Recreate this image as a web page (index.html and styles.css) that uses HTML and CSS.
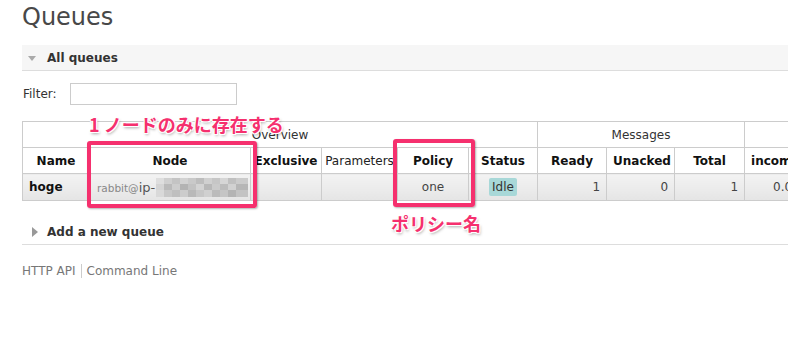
FILE: index.html
```html
<!DOCTYPE html>
<html lang="ja">
<head>
  <meta charset="UTF-8">
  <meta name="viewport" content="width=device-width, initial-scale=1.0">
  <title>Queues</title>
  <link rel="stylesheet" href="styles.css">
</head>
<body>
  <h1>Queues</h1>

  <div class="section open">
    <h2 class="section-title"><span class="arrow"></span>All queues</h2>
    <div class="section-body">
      <div class="filter">
        <label for="filter">Filter:</label>
        <input type="text" id="filter">
      </div>
      <table class="list">
        <colgroup>
          <col style="width: 67px">
          <col style="width: 161px">
          <col style="width: 71px">
          <col style="width: 76px">
          <col style="width: 71px">
          <col style="width: 69px">
          <col style="width: 69px">
          <col style="width: 68px">
          <col style="width: 70px">
          <col style="width: 72px">
          <col style="width: 100px">
          <col style="width: 60px">
        </colgroup>
        <thead>
          <tr class="groups">
            <th colspan="6">Overview</th>
            <th colspan="3">Messages</th>
            <th colspan="3">Message rates</th>
          </tr>
          <tr class="cols">
            <th>Name</th>
            <th>Node</th>
            <th>Exclusive</th>
            <th class="plain">Parameters</th>
            <th>Policy</th>
            <th>Status</th>
            <th>Ready</th>
            <th>Unacked</th>
            <th>Total</th>
            <th>incoming</th>
            <th>deliver / get</th>
            <th>ack</th>
          </tr>
        </thead>
        <tbody>
          <tr>
            <td class="name">hoge</td>
            <td class="node">
              <span class="host">rabbit@</span><span class="ip">ip-</span><svg class="mosaic" width="92" height="19" viewBox="0 0 92 19">
                <rect x="0" y="0" width="8" height="6" fill="#dedede"/>
                <rect x="8" y="0" width="8" height="6" fill="#cfcfcf"/>
                <rect x="16" y="0" width="8" height="6" fill="#c4c4c4"/>
                <rect x="24" y="0" width="8" height="6" fill="#d2d2d2"/>
                <rect x="32" y="0" width="8" height="6" fill="#c9c9c9"/>
                <rect x="40" y="0" width="8" height="6" fill="#bdbdbd"/>
                <rect x="48" y="0" width="8" height="6" fill="#d0d0d0"/>
                <rect x="56" y="0" width="8" height="6" fill="#c6c6c6"/>
                <rect x="64" y="0" width="8" height="6" fill="#d6d6d6"/>
                <rect x="72" y="0" width="8" height="6" fill="#c0c0c0"/>
                <rect x="80" y="0" width="12" height="6" fill="#cbcbcb"/>
                <rect x="0" y="6" width="8" height="6" fill="#d4d4d4"/>
                <rect x="8" y="6" width="8" height="6" fill="#bababa"/>
                <rect x="16" y="6" width="8" height="6" fill="#cdcdcd"/>
                <rect x="24" y="6" width="8" height="6" fill="#b3b3b3"/>
                <rect x="32" y="6" width="8" height="6" fill="#c2c2c2"/>
                <rect x="40" y="6" width="8" height="6" fill="#d3d3d3"/>
                <rect x="48" y="6" width="8" height="6" fill="#b8b8b8"/>
                <rect x="56" y="6" width="8" height="6" fill="#cacaca"/>
                <rect x="64" y="6" width="8" height="6" fill="#bcbcbc"/>
                <rect x="72" y="6" width="8" height="6" fill="#d1d1d1"/>
                <rect x="80" y="6" width="12" height="6" fill="#b6b6b6"/>
                <rect x="0" y="12" width="8" height="7" fill="#d9d9d9"/>
                <rect x="8" y="12" width="8" height="7" fill="#c8c8c8"/>
                <rect x="16" y="12" width="8" height="7" fill="#bfbfbf"/>
                <rect x="24" y="12" width="8" height="7" fill="#cccccc"/>
                <rect x="32" y="12" width="8" height="7" fill="#b9b9b9"/>
                <rect x="40" y="12" width="8" height="7" fill="#c7c7c7"/>
                <rect x="48" y="12" width="8" height="7" fill="#d0d0d0"/>
                <rect x="56" y="12" width="8" height="7" fill="#bbbbbb"/>
                <rect x="64" y="12" width="8" height="7" fill="#c5c5c5"/>
                <rect x="72" y="12" width="8" height="7" fill="#b4b4b4"/>
                <rect x="80" y="12" width="12" height="7" fill="#c3c3c3"/>
              </svg>
            </td>
            <td></td>
            <td></td>
            <td class="center">one</td>
            <td class="center"><span class="status-idle">Idle</span></td>
            <td class="num">1</td>
            <td class="num">0</td>
            <td class="num">1</td>
            <td class="num">0.00/s</td>
            <td class="num">0.00/s</td>
            <td class="num">0.00/s</td>
          </tr>
        </tbody>
      </table>
    </div>
  </div>

  <div class="section closed">
    <h2 class="section-title"><span class="arrow"></span>Add a new queue</h2>
  </div>

  <div class="footer">
    <a href="#">HTTP API</a><a href="#" class="sep">Command Line</a>
  </div>

  <!-- annotations drawn over the screenshot -->
  <div class="mark mark-node"></div>
  <div class="mark mark-policy"></div>
  <div class="note note-node">1 ノードのみに存在する</div>
  <div class="note note-policy">ポリシー名</div>
</body>
</html>
```

FILE: styles.css
```css
html, body {
  overflow: hidden;
}

body {
  margin: 0;
  padding: 0 0 0 22px;
  font-family: "DejaVu Sans", Verdana, sans-serif;
  font-size: 12px;
  color: #444;
  background-color: #fff;
  position: relative;
}

h1 {
  margin: 3px 0 14px;
  font-size: 24px;
  line-height: 28px;
  font-weight: normal;
  color: #484848;
}

.section-title {
  display: flex;
  align-items: center;
  margin: 0;
  height: 25px;
  font-size: 12px;
  font-weight: bold;
  color: #333;
  border-bottom: 1px solid #ddd;
}

.open .section-title {
  background-color: #f6f6f6;
}

.arrow {
  width: 0;
  height: 0;
}

.open .arrow {
  margin: 1px 11px 0 6px;
  border-left: 4px solid transparent;
  border-right: 4px solid transparent;
  border-top: 5px solid #aaa;
}

.closed .arrow {
  margin: 0 9px 0 10px;
  border-top: 5px solid transparent;
  border-bottom: 5px solid transparent;
  border-left: 6px solid #999;
}

.filter {
  display: flex;
  align-items: center;
  gap: 13px;
  margin: 12px 0 16px 1px;
}

.filter label {
  color: #333;
}

.filter input {
  width: 167px;
  height: 22px;
  box-sizing: border-box;
  border: 1px solid #ccc;
  padding: 2px 4px;
  margin: 0;
}

.list {
  table-layout: fixed;
  width: 954px;
  border-collapse: collapse;
  border: 1px solid #ccc;
}

.list th,
.list td {
  border: 1px solid #ccc;
  padding: 0 6px;
  white-space: nowrap;
  overflow: hidden;
}

.list th {
  height: 25px;
  font-weight: bold;
  color: #111;
  text-align: center;
}

.list .groups th {
  font-weight: normal;
  color: #333;
}

.list th.plain {
  font-weight: normal;
  color: #222;
  padding: 0 2px;
}

.list th:nth-child(3) {
  padding: 0 2px;
}

.list td {
  height: 26px;
  background: linear-gradient(#f3f3f3, #e5e5e5);
  color: #444;
}

.list td.name {
  font-weight: bold;
  color: #111;
}

.list td.node {
  padding-left: 7px;
  font-size: 0;
}

.host {
  font-size: 10.5px;
  color: #888;
}

.ip {
  font-size: 13px;
  color: #555;
}

.mosaic {
  vertical-align: -5px;
  margin-left: 1px;
}

.list td.center {
  text-align: center;
}

.list td.num {
  text-align: right;
}

.status-idle {
  display: inline-block;
  padding: 0 3px;
  line-height: 18px;
  border-radius: 2px;
  background-color: #a8d8d8;
  color: #333;
}

.closed {
  margin-top: 18px;
}

.footer {
  margin-top: 17px;
  line-height: 19px;
}

.footer a {
  color: #777;
  text-decoration: none;
}

.footer a.sep {
  border-left: 1px solid #ccc;
  margin-left: 5px;
  padding-left: 5px;
}

.mark {
  position: absolute;
  border: 4px solid #f5306e;
  border-radius: 3px;
  box-shadow: 1px 1px 2px rgba(0, 0, 0, 0.3);
}

.mark-node {
  left: 87px;
  top: 141px;
  width: 162px;
  height: 59px;
}

.mark-policy {
  left: 393px;
  top: 139px;
  width: 74px;
  height: 60px;
}

.note {
  position: absolute;
  font-family: "Noto Sans CJK JP", sans-serif;
  font-size: 18px;
  line-height: 18px;
  font-weight: bold;
  color: #f5306e;
  white-space: nowrap;
  text-shadow: -1px -1px 0 #fff, 1px -1px 0 #fff, -1px 1px 0 #fff, 1px 1px 0 #fff, 1px 2px 3px rgba(0, 0, 0, 0.35);
}

.note-node {
  left: 89px;
  top: 115px;
}

.note-policy {
  left: 391px;
  top: 214px;
}
```
